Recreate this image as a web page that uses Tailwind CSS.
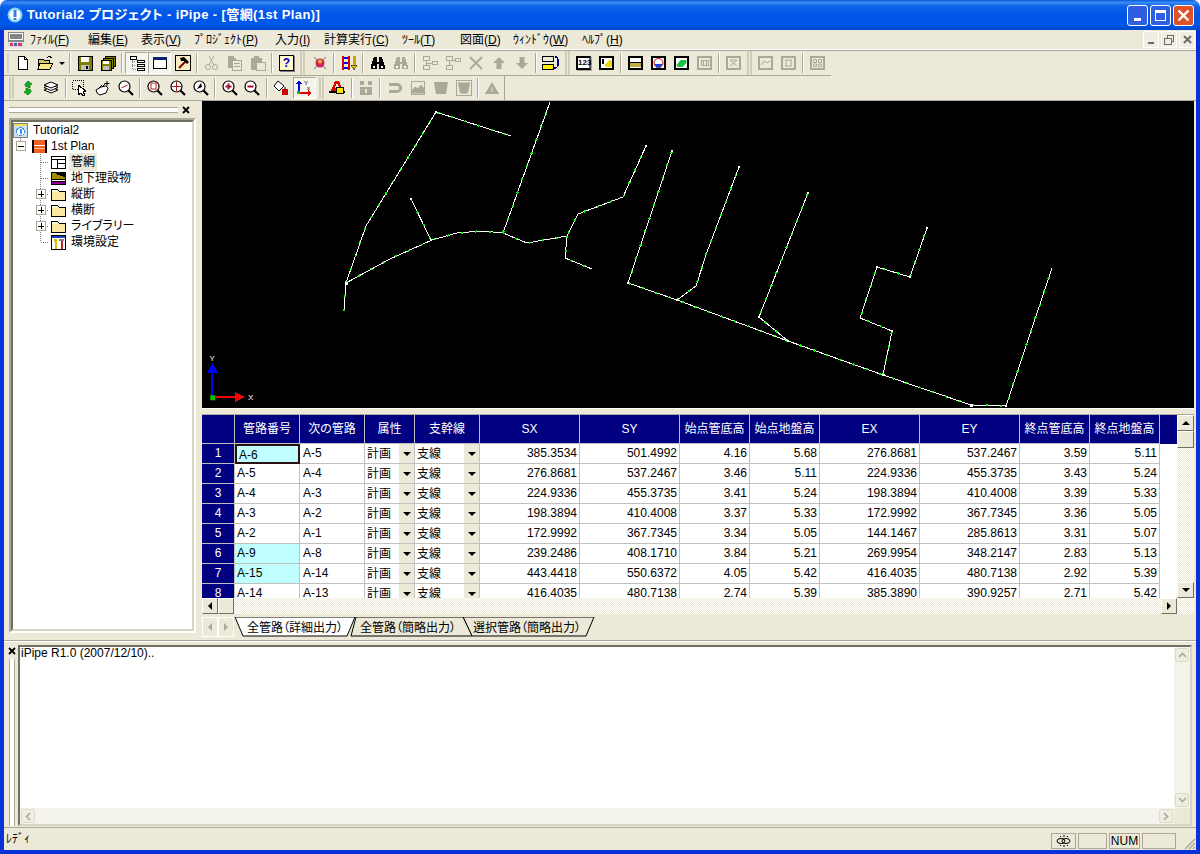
<!DOCTYPE html>
<html lang="ja">
<head>
<meta charset="UTF-8">
<title>iPipe</title>
<script src="https://cdn.jsdelivr.net/npm/@tailwindcss/browser@4"></script>
</head>
<body class="bg-white">
<div class="w-[1200px] h-[854px] overflow-hidden flex flex-col font-['Liberation_Sans','Noto_Sans_CJK_JP',sans-serif] text-[12px] text-black [font-feature-settings:'palt']">

  <!-- title bar -->
  <div class="h-[30px] shrink-0 rounded-t-[7px] flex items-center pl-[7px] pr-[6px] bg-[linear-gradient(#0a57d8_0,#3a8cf6_8%,#0f63e8_20%,#0055e5_50%,#0058ea_80%,#0049cc_100%)]">
    <svg class="w-[16px] h-[16px]" viewBox="0 0 16 16"><circle cx="8" cy="8" r="7.5" fill="#7fd4f4"/><circle cx="8" cy="8" r="5.5" fill="#fff"/><rect x="6.5" y="3" width="3" height="7" fill="#3a80d8"/><rect x="6.5" y="11" width="3" height="2" fill="#3a80d8"/></svg>
    <span class="ml-[4px] text-white font-bold text-[13px] tracking-[0.4px] whitespace-nowrap">Tutorial2 プロジェクト - iPipe - [管網(1st Plan)]</span>
    <div class="ml-auto flex gap-[2px]">
      <div class="w-[21px] h-[21px] rounded-[3px] border border-white bg-[#2f5fe0] flex items-end pl-[6px] pb-[4px]"><div class="w-[7px] h-[3px] bg-white"></div></div>
      <div class="w-[21px] h-[21px] rounded-[3px] border border-white bg-[#2f5fe0] flex items-center justify-center"><div class="w-[11px] h-[11px] border border-white border-t-[3px]"></div></div>
      <div class="w-[21px] h-[21px] rounded-[3px] border border-white bg-[#e0512a] flex items-center justify-center"><svg class="w-[13px] h-[13px]" viewBox="0 0 13 13"><path d="M1.5 1.5l10 10M11.5 1.5l-10 10" stroke="#fff" stroke-width="2.4"/></svg></div>
    </div>
  </div>

  <!-- window body -->
  <div class="flex-1 min-h-0 flex flex-col border-x-4 border-b-4 border-[#0831d9] bg-[#ece9d8]">

    <!-- menu -->
    <div class="h-[19px] shrink-0 flex items-center relative">
      <svg class="ml-[4px] w-[16px] h-[16px]" viewBox="0 0 16 16" shape-rendering="crispEdges"><rect x="0" y="0" width="16" height="10" fill="#848484"/><rect x="1" y="1" width="14" height="7" fill="#fff"/><rect x="2" y="2" width="12" height="5" fill="#848484"/><rect x="0" y="10" width="16" height="5" fill="#d8d8f0"/><rect x="2" y="11" width="3" height="3" fill="#d04040"/><rect x="6" y="11" width="3" height="3" fill="#4060c0"/><rect x="10" y="11" width="4" height="3" fill="#d04040"/></svg>
      <span class="absolute left-[26px]">ﾌｧｲﾙ(<u>F</u>)</span>
      <span class="absolute left-[84px]">編集(<u>E</u>)</span>
      <span class="absolute left-[137px]">表示(<u>V</u>)</span>
      <span class="absolute left-[190px]">ﾌﾟﾛｼﾞｪｸﾄ(<u>P</u>)</span>
      <span class="absolute left-[271px]">入力(<u>I</u>)</span>
      <span class="absolute left-[320px]">計算実行(<u>C</u>)</span>
      <span class="absolute left-[398px]">ﾂｰﾙ(<u>T</u>)</span>
      <span class="absolute left-[456px]">図面(<u>D</u>)</span>
      <span class="absolute left-[509px]">ｳｨﾝﾄﾞｳ(<u>W</u>)</span>
      <span class="absolute left-[578px]">ﾍﾙﾌﾟ(<u>H</u>)</span>
      <div class="ml-auto flex gap-[2px] pr-[1px]">
        <div class="w-[16px] h-[17px] bg-[#f0eee2] border border-white flex items-end justify-center pb-[3px]"><div class="w-[6px] h-[2px] bg-[#6e6e60]"></div></div>
        <div class="w-[16px] h-[17px] bg-[#f0eee2] border border-white flex items-center justify-center"><svg class="w-[10px] h-[10px]" viewBox="0 0 10 10" shape-rendering="crispEdges" fill="none" stroke="#6e6e60"><path d="M3 3V.5h6.5V6H7"/><path d="M.5 3.500h6.500V9.500H.5z"/></svg></div>
        <div class="w-[16px] h-[17px] bg-[#f0eee2] border border-white flex items-center justify-center"><svg class="w-[9px] h-[9px]" viewBox="0 0 9 9"><path d="M1 1l7 7M8 1l-7 7" stroke="#6e6e60" stroke-width="2"/></svg></div>
      </div>
    </div>
    <div class="h-[2px] shrink-0 border-t border-white bg-[#aca899]"></div>

    <svg class="hidden">
      <symbol id="lens" viewBox="0 0 16 16"><circle cx="6.500" cy="6.500" r="5.500" fill="#fff" stroke="#000" stroke-width="1.200"/><path d="M10.500 10.500l4.500 4.500" stroke="#000" stroke-width="2.200"/></symbol>
    </svg>

    <!-- toolbar 1 -->
    <div class="h-[25px] shrink-0 flex items-center">
      <div class="flex items-center h-[25px] w-[827px] border-b border-[#aca899]">
        <span class="w-[2px] h-[20px] ml-[3px] mr-[2px] bg-[#d8d4c2]"></span>
        <div class="w-[23px] h-[22px] flex items-center justify-center"><svg class="w-4 h-4" viewBox="0 0 16 16" shape-rendering="crispEdges"><path d="M3.500 1.500h6l3 3v10h-9z" fill="#fff" stroke="#000"/><path d="M9.500 1.500v3h3" fill="none" stroke="#000"/></svg></div>
        <div class="w-[23px] h-[22px] flex items-center justify-center"><svg class="w-[17px] h-4" viewBox="0 0 17 16" shape-rendering="crispEdges"><path d="M1 4h5l1 1h5v8H1z" fill="#d8c860" stroke="#000"/><path d="M3 8h13l-3 6H1z" fill="#f8e888" stroke="#000"/><path d="M10 3l2-2 3 2" fill="none" stroke="#000"/></svg></div>
        <div class="w-[10px] h-[22px] flex items-center justify-center"><div class="w-0 h-0 border-x-[3px] border-x-transparent border-t-[3px] border-t-black"></div></div>
        <span class="mx-[2px] w-[2px] h-[20px] border-l border-l-[#aca899] border-r border-r-white"></span>
        <div class="w-[23px] h-[22px] flex items-center justify-center"><svg class="w-4 h-4" viewBox="0 0 16 16" shape-rendering="crispEdges"><rect x="1" y="1" width="14" height="14" fill="#808000" stroke="#000"/><rect x="4" y="2" width="8" height="5" fill="#fff"/><rect x="4" y="10" width="8" height="5" fill="#c0c0c0"/><rect x="9" y="11" width="2" height="3" fill="#000"/></svg></div>
        <div class="w-[23px] h-[22px] flex items-center justify-center"><svg class="w-4 h-4" viewBox="0 0 16 16" shape-rendering="crispEdges"><rect x="5" y="1" width="10" height="10" fill="#808000" stroke="#000"/><rect x="3" y="3" width="10" height="10" fill="#808000" stroke="#000"/><rect x="1" y="5" width="10" height="10" fill="#808000" stroke="#000"/><rect x="3" y="6" width="6" height="3" fill="#fff"/><rect x="3" y="11" width="6" height="4" fill="#c0c0c0"/></svg></div>
        <span class="mx-[2px] w-[2px] h-[20px] border-l border-l-[#aca899] border-r border-r-white"></span>
        <div class="w-[23px] h-[22px] flex items-center justify-center border border-t-[#aca899] border-l-[#aca899] border-b-white border-r-white bg-[#f4f3ec]"><svg class="w-4 h-4" viewBox="0 0 16 16" shape-rendering="crispEdges"><rect x="1" y="1" width="6" height="3" fill="#fff" stroke="#000"/><rect x="8" y="5" width="7" height="2" fill="#fff" stroke="#000"/><rect x="8" y="9" width="7" height="2" fill="#fff" stroke="#000"/><rect x="8" y="13" width="7" height="2" fill="#fff" stroke="#000"/><path d="M3 5v9h4M3 10h4M3 6h4" stroke="#808080" stroke-dasharray="1 1" fill="none"/></svg></div>
        <div class="w-[23px] h-[22px] flex items-center justify-center border border-t-[#aca899] border-l-[#aca899] border-b-white border-r-white bg-[#f4f3ec]"><svg class="w-4 h-4" viewBox="0 0 16 16" shape-rendering="crispEdges"><rect x="1.500" y="2.500" width="13" height="11" fill="#fff" stroke="#000"/><rect x="1" y="2" width="14" height="3" fill="#0a246a"/></svg></div>
        <div class="w-[23px] h-[22px] flex items-center justify-center"><svg class="w-4 h-4" viewBox="0 0 16 16"><rect x="0.500" y="0.500" width="15" height="15" fill="#f8f0c0" stroke="#000"/><path d="M4 13l7-7" stroke="#800000" stroke-width="2"/><path d="M5 3l4-1 5 5-2 2-3-3-3 0z" fill="#000"/></svg></div>
        <span class="mx-[2px] w-[2px] h-[20px] border-l border-l-[#aca899] border-r border-r-white"></span>
        <div class="w-[23px] h-[22px] flex items-center justify-center"><svg class="w-4 h-4" viewBox="0 0 16 16" fill="none" stroke="#aca899"><circle cx="4" cy="12" r="2.500"/><circle cx="11" cy="12" r="2.500"/><path d="M5 10L10 1M10 10L5 1"/></svg></div>
        <div class="w-[23px] h-[22px] flex items-center justify-center"><svg class="w-4 h-4" viewBox="0 0 16 16" shape-rendering="crispEdges" fill="#aca899"><path d="M1 1h6v2h2v10H1z"/><path d="M5 5h9v10H5z" fill="#ece9d8" stroke="#aca899"/><path d="M7 8h6v1H7zM7 11h6v1H7z"/></svg></div>
        <div class="w-[23px] h-[22px] flex items-center justify-center"><svg class="w-4 h-4" viewBox="0 0 16 16" shape-rendering="crispEdges" fill="#aca899"><path d="M1 3h11v12H1z"/><path d="M4 1h5v3H4z"/><rect x="6" y="7" width="9" height="8" fill="#ece9d8" stroke="#aca899"/></svg></div>
        <span class="mx-[2px] w-[2px] h-[20px] border-l border-l-[#aca899] border-r border-r-white"></span>
        <div class="w-[23px] h-[22px] flex items-center justify-center"><div class="w-[15px] h-[16px] border border-black bg-[#fff8c8] shadow-[1px_1px_0_#808080] flex items-center justify-center font-bold text-[#0000c0] text-[12px] leading-none">?</div></div>
        <span class="ml-[2px] mr-[3px] w-[5px] h-[24px] border-x-2 border-x-[#d0ccb8]"></span>
        <div class="w-[23px] h-[22px] flex items-center justify-center"><svg class="w-4 h-4" viewBox="0 0 16 16"><path d="M2 2l12 12M14 2L2 14" stroke="#aca899" stroke-width="1.500"/><circle cx="8" cy="8" r="4.500" fill="#d02060"/><circle cx="8" cy="6.500" r="2" fill="#e0c020"/></svg></div>
        <span class="mx-[2px] w-[2px] h-[20px] border-l border-l-[#aca899] border-r border-r-white"></span>
        <div class="w-[23px] h-[22px] flex items-center justify-center"><svg class="w-4 h-4" viewBox="0 0 16 16" shape-rendering="crispEdges"><path d="M1 3h8M1 8h8M1 13h8" stroke="#0000e0" stroke-width="2"/><path d="M2 1v14M8 1v14" stroke="#d00000" stroke-width="1.500"/><path d="M13 1v10" stroke="#d0a000" stroke-width="3"/><path d="M10 10h6l-3 5z" fill="#e0c000" stroke="#000" stroke-width=".5"/></svg></div>
        <span class="mx-[2px] w-[2px] h-[20px] border-l border-l-[#aca899] border-r border-r-white"></span>
        <div class="w-[23px] h-[22px] flex items-center justify-center"><svg class="w-4 h-4" viewBox="0 0 16 16" shape-rendering="crispEdges"><path d="M4 2h3v5h2V2h3l3 9v3H9V9H7v5H1v-3z" fill="#000"/><rect x="3" y="11" width="2" height="2" fill="#fff"/><rect x="11" y="11" width="2" height="2" fill="#fff"/></svg></div>
        <div class="w-[23px] h-[22px] flex items-center justify-center"><svg class="w-4 h-4" viewBox="0 0 16 16" shape-rendering="crispEdges"><path d="M4 2h3v5h2V2h3l3 9v3H9V9H7v5H1v-3z" fill="#aca899"/><rect x="3" y="11" width="2" height="2" fill="#fff"/><rect x="11" y="11" width="2" height="2" fill="#fff"/></svg></div>
        <span class="mx-[2px] w-[2px] h-[20px] border-l border-l-[#aca899] border-r border-r-white"></span>
        <div class="w-[23px] h-[22px] flex items-center justify-center"><svg class="w-4 h-4" viewBox="0 0 16 16" shape-rendering="crispEdges" fill="#ece9d8" stroke="#aca899"><rect x="1.500" y="1.500" width="6" height="4"/><rect x="1.500" y="10.500" width="6" height="4"/><rect x="10.500" y="6.500" width="5" height="3"/><path d="M4.500 5.500v5M4.500 8h6" fill="none"/></svg></div>
        <div class="w-[23px] h-[22px] flex items-center justify-center"><svg class="w-4 h-4" viewBox="0 0 16 16" shape-rendering="crispEdges" fill="#ece9d8" stroke="#aca899"><rect x="1.500" y="1.500" width="6" height="4"/><rect x="1.500" y="10.500" width="6" height="4"/><rect x="10.500" y="3.500" width="5" height="3"/><path d="M4.500 5.500v5M7.500 5h3" fill="none"/></svg></div>
        <div class="w-[23px] h-[22px] flex items-center justify-center"><svg class="w-4 h-4" viewBox="0 0 16 16"><path d="M2 2l12 12M14 2L2 14" stroke="#aca899" stroke-width="2"/></svg></div>
        <div class="w-[23px] h-[22px] flex items-center justify-center"><svg class="w-4 h-4" viewBox="0 0 16 16"><path d="M8 2l6 6h-3.500v6h-5V8H2z" fill="#aca899"/></svg></div>
        <div class="w-[23px] h-[22px] flex items-center justify-center"><svg class="w-4 h-4" viewBox="0 0 16 16"><path d="M8 14l6-6h-3.500V2h-5v6H2z" fill="#aca899"/></svg></div>
        <span class="mx-[2px] w-[2px] h-[20px] border-l border-l-[#aca899] border-r border-r-white"></span>
        <div class="w-[23px] h-[22px] flex items-center justify-center"><svg class="w-[17px] h-4" viewBox="0 0 17 16" shape-rendering="crispEdges"><rect x="0.500" y="1.500" width="11" height="5" fill="#ece9d8" stroke="#000"/><rect x="0.500" y="9.500" width="11" height="5" fill="#f8f000" stroke="#000"/><path d="M13 2h2l1 2v7l-2 2h-2" fill="none" stroke="#000080" stroke-width="1.300"/></svg></div>
        <span class="ml-[3px] mr-[2px] w-[5px] h-[24px] border-x-2 border-x-[#d0ccb8]"></span>
        <div class="w-[23px] h-[22px] flex items-center justify-center"><div class="w-[15px] h-[14px] border-2 border-black border-r-[#555] bg-white shadow-[1px_1px_0_#aca899] text-[8px] leading-[10px] font-bold text-center">123</div></div>
        <div class="w-[23px] h-[22px] flex items-center justify-center"><svg class="w-[15px] h-[14px]" viewBox="0 0 15 14" shape-rendering="crispEdges"><rect x="1" y="1" width="13" height="12" fill="#fff" stroke="#000" stroke-width="2"/><rect x="3" y="3" width="2" height="5"/><path d="M6 8l5-4 2 2v5H7z" fill="#f0d800"/></svg></div>
        <span class="mx-[2px] w-[2px] h-[20px] border-l border-l-[#aca899] border-r border-r-white"></span>
        <div class="w-[23px] h-[22px] flex items-center justify-center"><svg class="w-[15px] h-[14px]" viewBox="0 0 15 14" shape-rendering="crispEdges"><rect x="1" y="1" width="13" height="12" fill="#fff" stroke="#000" stroke-width="2"/><rect x="2" y="6" width="11" height="1" fill="#000"/><rect x="2" y="7" width="11" height="4" fill="#c0b040"/></svg></div>
        <div class="w-[23px] h-[22px] flex items-center justify-center"><svg class="w-[15px] h-[14px]" viewBox="0 0 15 14"><rect x="1" y="1" width="13" height="12" fill="#fff" stroke="#000" stroke-width="2"/><circle cx="7.500" cy="7" r="4.500" fill="#fff" stroke="#e00000"/><path d="M3.500 8h8l-2 3.500h-4z" fill="#2040e0"/></svg></div>
        <div class="w-[23px] h-[22px] flex items-center justify-center"><svg class="w-[15px] h-[14px]" viewBox="0 0 15 14"><rect x="1" y="1" width="13" height="12" fill="#fff" stroke="#000" stroke-width="2"/><path d="M2.500 9l4-5h6v3l-4 4h-5z" fill="#20c040"/></svg></div>
        <div class="w-[23px] h-[22px] flex items-center justify-center"><svg class="w-[15px] h-[14px]" viewBox="0 0 15 14" shape-rendering="crispEdges" fill="none" stroke="#aca899"><rect x="1" y="1" width="13" height="12" stroke-width="2"/><path d="M4 4h7v5H4zM6 4v5M9 4v5"/></svg></div>
        <span class="mx-[2px] w-[2px] h-[20px] border-l border-l-[#aca899] border-r border-r-white"></span>
        <div class="w-[23px] h-[22px] flex items-center justify-center"><svg class="w-[15px] h-[14px]" viewBox="0 0 15 14" fill="none" stroke="#aca899"><rect x="1" y="1" width="13" height="12" stroke-width="2"/><path d="M4 4l7 6M11 4l-7 6M4 4h7"/></svg></div>
        <span class="ml-[2px] mr-[2px] w-[5px] h-[24px] border-x-2 border-x-[#d0ccb8]"></span>
        <div class="w-[23px] h-[22px] flex items-center justify-center"><svg class="w-[15px] h-[14px]" viewBox="0 0 15 14" fill="none" stroke="#aca899"><rect x="1" y="1" width="13" height="12" stroke-width="2"/><path d="M3 9l3-4 3 2 3-2"/></svg></div>
        <div class="w-[23px] h-[22px] flex items-center justify-center"><svg class="w-[15px] h-[14px]" viewBox="0 0 15 14" fill="none" stroke="#aca899"><rect x="1" y="1" width="13" height="12" stroke-width="2"/><path d="M4 4h7M5 4v6M10 4v6M4 10h7"/></svg></div>
        <span class="mx-[2px] w-[2px] h-[20px] border-l border-l-[#aca899] border-r border-r-white"></span>
        <div class="w-[23px] h-[22px] flex items-center justify-center"><svg class="w-[15px] h-[14px]" viewBox="0 0 15 14" fill="none" stroke="#aca899"><rect x="1" y="1" width="13" height="12" stroke-width="2"/><path d="M3.500 3.500h3v3h-3zM8.500 3.500h3v3h-3zM3.500 8h3v2.500h-3zM8.500 8h3v2.500h-3z"/></svg></div>
      </div>
    </div>

    <!-- toolbar 2 -->
    <div class="h-[24px] shrink-0 flex items-center">
      <div class="flex items-center h-[24px] w-[501px] border-r border-[#aca899]">
        <span class="ml-[5px] mr-[2px] w-[5px] h-[22px] border-x-2 border-x-[#d0ccb8]"></span>
        <div class="w-[23px] h-[22px] ml-[1px] flex items-center justify-center"><svg class="w-4 h-4" viewBox="0 0 16 16"><path d="M8 1l4 3-2 1v3L5 6V4z" fill="#10b020" stroke="#006000" stroke-width=".6"/><path d="M8 15l-4-3 2-1V8l5 2v2z" fill="#10b020" stroke="#006000" stroke-width=".6"/></svg></div>
        <div class="w-[23px] h-[22px] flex items-center justify-center"><svg class="w-4 h-4" viewBox="0 0 16 16" fill="#fff" stroke="#000"><path d="M1 10l7 3 7-3-7-3z"/><path d="M1 7.500l7 3 7-3-7-3z"/><path d="M1 5l7 3 7-3-7-3z"/></svg></div>
        <span class="mx-[2px] w-[2px] h-[20px] border-l border-l-[#aca899] border-r border-r-white"></span>
        <div class="w-[23px] h-[22px] flex items-center justify-center"><svg class="w-4 h-4" viewBox="0 0 16 16" shape-rendering="crispEdges"><rect x="0.500" y="0.500" width="11" height="9" fill="none" stroke="#000" stroke-dasharray="1 1"/><path d="M6 5l8 6-3 1 2 3-2 1-2-3-3 2z" fill="#fff" stroke="#000"/></svg></div>
        <div class="w-[23px] h-[22px] flex items-center justify-center"><svg class="w-4 h-4" viewBox="0 0 16 16"><path d="M1 10l5-3 5-1 2 2-2 5-6 2-3-2z" fill="#fff" stroke="#000"/><path d="M4 8l3-3M7 7l3-3M12 1v5M9.500 3.500h5" stroke="#000" fill="none"/></svg></div>
        <div class="w-[23px] h-[22px] flex items-center justify-center relative"><svg class="w-4 h-4"><use href="#lens"/></svg><svg class="absolute w-4 h-4" viewBox="0 0 16 16"><path d="M3.500 8l6-3" stroke="#c02020"/></svg></div>
        <span class="mx-[2px] w-[2px] h-[20px] border-l border-l-[#aca899] border-r border-r-white"></span>
        <div class="w-[23px] h-[22px] flex items-center justify-center relative"><svg class="w-4 h-4"><use href="#lens"/></svg><svg class="absolute w-4 h-4" viewBox="0 0 16 16"><rect x="4" y="3" width="5" height="6" fill="#fff" stroke="#c02020"/></svg></div>
        <div class="w-[23px] h-[22px] flex items-center justify-center relative"><svg class="w-4 h-4"><use href="#lens"/></svg><svg class="absolute w-4 h-4" viewBox="0 0 16 16"><path d="M6.500 1.500v10M1.500 6.500h10" stroke="#a02020"/></svg></div>
        <div class="w-[23px] h-[22px] flex items-center justify-center relative"><svg class="w-4 h-4"><use href="#lens"/></svg><svg class="absolute w-4 h-4" viewBox="0 0 16 16"><path d="M4 9l4-6 1 4z" fill="#000"/></svg></div>
        <span class="mx-[2px] w-[2px] h-[20px] border-l border-l-[#aca899] border-r border-r-white"></span>
        <div class="w-[23px] h-[22px] flex items-center justify-center relative"><svg class="w-4 h-4"><use href="#lens"/></svg><svg class="absolute w-4 h-4" viewBox="0 0 16 16"><path d="M3.500 6.500h6M6.500 3.500v6" stroke="#a01030" stroke-width="2"/></svg></div>
        <div class="w-[23px] h-[22px] flex items-center justify-center relative"><svg class="w-4 h-4"><use href="#lens"/></svg><svg class="absolute w-4 h-4" viewBox="0 0 16 16"><path d="M3.500 6.500h6" stroke="#a01030" stroke-width="2"/></svg></div>
        <span class="mx-[2px] w-[2px] h-[20px] border-l border-l-[#aca899] border-r border-r-white"></span>
        <div class="w-[23px] h-[22px] flex items-center justify-center"><svg class="w-4 h-4" viewBox="0 0 16 16"><path d="M5 1l6 5-5 5-5-5z" fill="#fff" stroke="#000"/><rect x="9" y="9" width="6" height="6" fill="#d00000"/><path d="M12 7v3" stroke="#000"/></svg></div>
        <div class="w-[23px] h-[22px] flex items-center justify-center border border-t-[#aca899] border-l-[#aca899] border-b-white border-r-white bg-[#f4f3ec]"><svg class="w-[18px] h-[18px]" viewBox="0 0 18 18" shape-rendering="crispEdges"><path d="M4 14V4" stroke="#0000e0" stroke-width="2"/><path d="M1 5l3-4 3 4z" fill="#0000e0"/><path d="M4 14h10" stroke="#e00000" stroke-width="2"/><path d="M13 11l4 3-4 3z" fill="#e00000"/><rect x="2" y="12" width="3" height="3" fill="#00c000"/><text x="9" y="6" font-size="6" fill="#000">Y</text><text x="12" y="11" font-size="6" fill="#000">x</text></svg></div>
        <span class="ml-[3px] mr-[2px] w-[5px] h-[22px] border-x-2 border-x-[#d0ccb8]"></span>
        <div class="w-[23px] h-[22px] flex items-center justify-center"><svg class="w-4 h-4" viewBox="0 0 16 16" shape-rendering="crispEdges"><path d="M6 1h4l5 12H1z" fill="#e00000"/><path d="M7 4h2l1 4H6z" fill="#ece9d8"/><rect x="0" y="11" width="16" height="2" fill="#000"/><rect x="7" y="7" width="7" height="6" fill="#f8e800" stroke="#000"/></svg></div>
        <span class="mx-[2px] w-[2px] h-[20px] border-l border-l-[#aca899] border-r border-r-white"></span>
        <div class="w-[23px] h-[22px] flex items-center justify-center"><svg class="w-4 h-4" viewBox="0 0 16 16" shape-rendering="crispEdges" fill="#aca899"><rect x="2" y="1" width="4" height="4"/><rect x="10" y="1" width="4" height="4"/><rect x="2" y="7" width="12" height="8"/><rect x="7" y="9" width="2" height="4" fill="#ece9d8"/></svg></div>
        <span class="mx-[2px] w-[2px] h-[20px] border-l border-l-[#aca899] border-r border-r-white"></span>
        <div class="w-[23px] h-[22px] flex items-center justify-center"><svg class="w-4 h-4" viewBox="0 0 16 16"><path d="M2 3h8a5 5 0 0 1 0 10H2v-3h8a2 2 0 0 0 0-4H2z" fill="#aca899"/></svg></div>
        <div class="w-[23px] h-[22px] flex items-center justify-center"><svg class="w-4 h-4" viewBox="0 0 16 16" fill="none" stroke="#aca899"><rect x="1.500" y="1.500" width="13" height="13"/><path d="M2 11l3-4 3 2 3-4 3 4v4H2z" fill="#aca899"/></svg></div>
        <div class="w-[23px] h-[22px] flex items-center justify-center"><svg class="w-4 h-4" viewBox="0 0 16 16"><path d="M1 2h14l-2 12H3z" fill="#aca899"/></svg></div>
        <div class="w-[23px] h-[22px] flex items-center justify-center"><svg class="w-4 h-4" viewBox="0 0 16 16" fill="none" stroke="#aca899"><rect x="0.500" y="0.500" width="15" height="15"/><path d="M2.500 3h11l-2 10h-7z" fill="#aca899"/></svg></div>
        <span class="mx-[2px] w-[2px] h-[20px] border-l border-l-[#aca899] border-r border-r-white"></span>
        <div class="w-[23px] h-[22px] flex items-center justify-center"><svg class="w-4 h-4" viewBox="0 0 16 16"><path d="M8 2l7 12H1z" fill="#aca899"/><path d="M8 7v5" stroke="#ece9d8"/></svg></div>
      </div>
    </div>
    <div class="h-px shrink-0 bg-[#aca899]"></div>

    <!-- main -->
    <div class="h-[536px] shrink-0 flex">
      <!-- tree pane -->
      <div class="w-[198px] shrink-0 flex flex-col pl-[5px] pr-[6px]">
        <div class="h-[17px] shrink-0 flex items-center">
          <div class="w-[169px] h-[6px] border-y border-y-[#aca899] bg-white"></div>
          <svg class="ml-[4px] w-[8px] h-[8px]" viewBox="0 0 8 8"><path d="M1 1l6 6M7 1L1 7" stroke="#000" stroke-width="1.800"/></svg>
        </div>
        <div class="h-[515px] shrink-0 border-2 border-t-[#aca899] border-l-[#aca899] border-b-white border-r-white">
          <div class="relative h-full bg-white border-2 border-t-[#716f64] border-l-[#716f64] border-b-[#d8d4c2] border-r-[#d8d4c2]">
            <!-- tree connectors -->
            <svg class="absolute left-0 top-0" width="60" height="140" shape-rendering="crispEdges">
              <path d="M7.500 14v10M7.500 24h6M27.500 32v88M27.500 40h8M27.500 56h8M27.500 72h8M27.500 88h8M27.500 104h8M27.500 120h8" stroke="#808080" stroke-dasharray="1 1" fill="none"/>
              <rect x="3.500" y="19.500" width="9" height="9" fill="#fff" stroke="#aca899"/><path d="M5 24h6" stroke="#000"/>
              <rect x="23.500" y="67.500" width="9" height="9" fill="#fff" stroke="#aca899"/><path d="M25 72h6M28 69v6" stroke="#000"/>
              <rect x="23.500" y="83.500" width="9" height="9" fill="#fff" stroke="#aca899"/><path d="M25 88h6M28 85v6" stroke="#000"/>
              <rect x="23.500" y="99.500" width="9" height="9" fill="#fff" stroke="#aca899"/><path d="M25 104h6M28 101v6" stroke="#000"/>
            </svg>
            <div class="relative flex flex-col">
              <div class="h-4 flex items-center"><svg class="w-[15px] h-[15px]" viewBox="0 0 15 15" shape-rendering="crispEdges"><rect x="0.500" y="0.500" width="14" height="14" fill="#c8e0f0" stroke="#808080"/><rect x="1" y="1" width="13" height="2" fill="#f0e060"/><circle cx="7.500" cy="8.500" r="4" fill="#fff" stroke="#4090e0"/><rect x="7" y="6" width="1.500" height="5" fill="#4090e0"/></svg><span class="ml-[5px]">Tutorial2</span></div>
              <div class="h-4 flex items-center pl-[19px]"><svg class="w-[15px] h-[15px]" viewBox="0 0 15 15" shape-rendering="crispEdges"><rect x="0" y="1" width="15" height="13" fill="#f06020"/><rect x="0" y="1" width="2" height="13" fill="#000"/><rect x="13" y="1" width="2" height="13" fill="#000"/><rect x="2" y="6" width="11" height="1" fill="#fff"/><rect x="2" y="9" width="11" height="1" fill="#f8c0a0"/></svg><span class="ml-[4px]">1st Plan</span></div>
              <div class="h-4 flex items-center pl-[38px]"><svg class="w-[15px] h-[15px]" viewBox="0 0 15 15" shape-rendering="crispEdges" fill="none" stroke="#000"><rect x="0.500" y="1.500" width="14" height="12" fill="#fff"/><path d="M1 4.500h13M6.500 5v8M7 8.500h7"/></svg><span class="ml-[3px] px-[2px] bg-[#ece9d8]">管網</span></div>
              <div class="h-4 flex items-center pl-[38px]"><svg class="w-[15px] h-[15px]" viewBox="0 0 15 15" shape-rendering="crispEdges"><rect x="0" y="1" width="15" height="13" fill="#000"/><path d="M1 2h3l3 2 7 2v2H1z" fill="#a09000"/><rect x="1" y="9" width="13" height="1" fill="#fff"/><rect x="1" y="11" width="13" height="2" fill="#900090"/></svg><span class="ml-[5px]">地下理設物</span></div>
              <div class="h-4 flex items-center pl-[38px]"><svg class="w-[15px] h-[15px]" viewBox="0 0 15 15" shape-rendering="crispEdges"><path d="M0.500 2.500h6l2 2h6v9h-14z" fill="#f8e8a0" stroke="#000"/><rect x="1" y="3" width="5" height="2" fill="#fff8d0"/></svg><span class="ml-[5px]">縦断</span></div>
              <div class="h-4 flex items-center pl-[38px]"><svg class="w-[15px] h-[15px]" viewBox="0 0 15 15" shape-rendering="crispEdges"><path d="M0.500 2.500h6l2 2h6v9h-14z" fill="#f8e8a0" stroke="#000"/><rect x="1" y="3" width="5" height="2" fill="#fff8d0"/></svg><span class="ml-[5px]">横断</span></div>
              <div class="h-4 flex items-center pl-[38px]"><svg class="w-[15px] h-[15px]" viewBox="0 0 15 15" shape-rendering="crispEdges"><path d="M0.500 2.500h6l2 2h6v9h-14z" fill="#f8e8a0" stroke="#000"/><rect x="1" y="3" width="5" height="2" fill="#fff8d0"/></svg><span class="ml-[5px]">ライブラリー</span></div>
              <div class="h-4 flex items-center pl-[38px]"><svg class="w-[15px] h-[15px]" viewBox="0 0 15 15" shape-rendering="crispEdges"><rect x="0.500" y="0.500" width="14" height="14" fill="#fff" stroke="#000"/><rect x="1" y="1" width="13" height="2" fill="#2040c0"/><rect x="3" y="4" width="3" height="3" fill="#e0c000"/><rect x="4" y="7" width="1.500" height="7" fill="#e0c000"/><rect x="8" y="4" width="5" height="2" fill="#808080"/><rect x="10" y="6" width="2" height="8" fill="#c02020"/></svg><span class="ml-[5px]">環境設定</span></div>
            </div>
          </div>
        </div>
      </div>

      <!-- map + grid -->
      <div class="w-[992px] shrink-0 flex flex-col">
        <svg class="h-[307px] w-[992px] shrink-0 bg-black" viewBox="202 101 992 307" shape-rendering="crispEdges">
          <g fill="none" stroke="#fff">
            <polyline points="344,311 346,283 366,226 436,112 511,136"/>
            <polyline points="346,283 388,260 432,240 457,233 482,231 503,233 527,243 567,236 578,214 623,197 646,146"/>
            <polyline points="411,199 431,240"/>
            <polyline points="503,233 550,102"/>
            <polyline points="567,236 565,258 592,269"/>
            <polyline points="672,151 628,283 677,300 788,341 883,375 971,405 1006,406 1052,268"/>
            <polyline points="677,300 696,286 707,252 739,167"/>
            <polyline points="788,341 759,317 808,193"/>
            <polyline points="883,375 892,331 860,318 877,267 910,277 927,228"/>
          </g>
          <g fill="none" stroke="#00ff00" stroke-width="2" stroke-dasharray="2 12">
            <polyline points="344,311 346,283 366,226 436,112 511,136"/>
            <polyline points="346,283 388,260 432,240 457,233 482,231 503,233 527,243 567,236 578,214 623,197 646,146"/>
            <polyline points="411,199 431,240"/>
            <polyline points="503,233 550,102"/>
            <polyline points="567,236 565,258 592,269"/>
            <polyline points="672,151 628,283 677,300 788,341 883,375 971,405 1006,406 1052,268"/>
            <polyline points="677,300 696,286 707,252 739,167"/>
            <polyline points="788,341 759,317 808,193"/>
            <polyline points="883,375 892,331 860,318 877,267 910,277 927,228"/>
          </g>
          <g fill="#fff">
            <rect x="345" y="282" width="3" height="3"/><rect x="435" y="111" width="2" height="2"/><rect x="410" y="198" width="2" height="2"/><rect x="430" y="239" width="2" height="2"/>
            <rect x="645" y="145" width="2" height="2"/><rect x="671" y="150" width="2" height="2"/><rect x="738" y="166" width="2" height="2"/><rect x="807" y="192" width="2" height="2"/>
            <rect x="627" y="282" width="2" height="2"/><rect x="676" y="299" width="2" height="2"/><rect x="787" y="340" width="2" height="2"/><rect x="882" y="374" width="3" height="2"/>
            <rect x="970" y="404" width="3" height="3"/><rect x="1005" y="405" width="2" height="2"/><rect x="758" y="316" width="2" height="2"/><rect x="891" y="330" width="2" height="2"/>
            <rect x="926" y="227" width="2" height="2"/><rect x="876" y="266" width="2" height="2"/><rect x="909" y="276" width="2" height="2"/>
          </g>
          <path d="M212 397V372" stroke="#0000ff" stroke-width="2"/>
          <path d="M207 373l5.500-10 5.500 10z" fill="#0000ff"/>
          <path d="M212 397h24" stroke="#ff0000" stroke-width="2"/>
          <path d="M235 392l10 5-10 5z" fill="#ff0000"/>
          <rect x="210" y="395" width="5" height="5" fill="#00c000" stroke="#006000" stroke-width=".5"/>
          <text x="209.500" y="361" font-size="8" fill="#fff" font-family="Liberation Sans">Y</text>
          <text x="248" y="400" font-size="8" fill="#fff" font-family="Liberation Sans">X</text>
        </svg>
        <div class="h-[7px] shrink-0 border-t border-white border-b border-b-[#aca899]"></div>

        <div class="h-[183px] shrink-0 flex">
          <div id="grid" class="w-[975px] overflow-hidden grid grid-cols-[33px_65px_65px_50px_65px_100px_100px_70px_70px_100px_100px_70px_70px_17px] grid-rows-[29px_repeat(8,20px)] content-start bg-white">
            <div class="bg-[#000080] border-r border-b border-[#c0c0c0]"></div>
            <div class="bg-[#000080] border-r border-b border-[#c0c0c0] text-white flex items-center justify-center">管路番号</div>
            <div class="bg-[#000080] border-r border-b border-[#c0c0c0] text-white flex items-center justify-center">次の管路</div>
            <div class="bg-[#000080] border-r border-b border-[#c0c0c0] text-white flex items-center justify-center">属性</div>
            <div class="bg-[#000080] border-r border-b border-[#c0c0c0] text-white flex items-center justify-center">支幹線</div>
            <div class="bg-[#000080] border-r border-b border-[#c0c0c0] text-white flex items-center justify-center">SX</div>
            <div class="bg-[#000080] border-r border-b border-[#c0c0c0] text-white flex items-center justify-center">SY</div>
            <div class="bg-[#000080] border-r border-b border-[#c0c0c0] text-white flex items-center justify-center">始点管底高</div>
            <div class="bg-[#000080] border-r border-b border-[#c0c0c0] text-white flex items-center justify-center">始点地盤高</div>
            <div class="bg-[#000080] border-r border-b border-[#c0c0c0] text-white flex items-center justify-center">EX</div>
            <div class="bg-[#000080] border-r border-b border-[#c0c0c0] text-white flex items-center justify-center">EY</div>
            <div class="bg-[#000080] border-r border-b border-[#c0c0c0] text-white flex items-center justify-center">終点管底高</div>
            <div class="bg-[#000080] border-r border-b border-[#c0c0c0] text-white flex items-center justify-center">終点地盤高</div>
            <div class="bg-[#000080]"></div>
          </div>
          <!-- grid vertical scrollbar -->
          <div class="w-[17px] shrink-0 flex flex-col bg-[repeating-conic-gradient(#ece9d8_0_25%,#fff_0_50%)] bg-[length:2px_2px]">
            <div class="h-[16px] bg-[#ece9d8] border border-t-white border-l-white border-r-[#716f64] border-b-[#716f64] flex items-center justify-center"><div class="w-0 h-0 border-x-[4px] border-x-transparent border-b-[4px] border-b-black"></div></div>
            <div class="h-[17px] bg-[#ece9d8] border border-t-white border-l-white border-r-[#716f64] border-b-[#716f64]"></div>
            <div class="h-[16px] mt-auto bg-[#ece9d8] border border-t-white border-l-white border-r-[#716f64] border-b-[#716f64] flex items-center justify-center"><div class="w-0 h-0 border-x-[4px] border-x-transparent border-t-[4px] border-t-black"></div></div>
          </div>
        </div>

        <!-- grid horizontal scrollbar -->
        <div class="h-[16px] shrink-0 flex bg-[repeating-conic-gradient(#ece9d8_0_25%,#fff_0_50%)] bg-[length:2px_2px]">
          <div class="w-[16px] bg-[#ece9d8] border border-t-white border-l-white border-r-[#716f64] border-b-[#716f64] flex items-center justify-center"><div class="w-0 h-0 border-y-[4px] border-y-transparent border-r-[4px] border-r-black"></div></div>
          <div class="w-[16px] bg-[#ece9d8] border border-t-white border-l-white border-r-[#716f64] border-b-[#716f64]"></div>
          <div class="w-[16px] ml-auto mr-[17px] bg-[#ece9d8] border border-t-white border-l-white border-r-[#716f64] border-b-[#716f64] flex items-center justify-center"><div class="w-0 h-0 border-y-[4px] border-y-transparent border-l-[4px] border-l-black"></div></div>
        </div>

        <!-- sheet tabs -->
        <div class="h-[23px] shrink-0 flex items-start pt-[3px]">
          <div class="w-[16px] h-[20px] border border-white flex items-center justify-center"><div class="w-0 h-0 border-y-[4px] border-y-transparent border-r-[4px] border-r-[#aca899]"></div></div>
          <div class="w-[16px] h-[20px] border border-white flex items-center justify-center"><div class="w-0 h-0 border-y-[4px] border-y-transparent border-l-[4px] border-l-[#aca899]"></div></div>
          <svg class="w-[380px] h-[20px]" viewBox="234 617 380 20" font-size="12">
            <path d="M594 617L586 636H472L463 617z" fill="#ece9d8" stroke="#000"/>
            <path d="M356 617H463L472 636H351z" fill="#ece9d8" stroke="#000"/>
            <path d="M235 617H355L347 636H243z" fill="#fff" stroke="#000"/>
            <text x="247" y="632">全管路（詳細出力）</text>
            <text x="360" y="632">全管路（簡略出力）</text>
            <text x="473" y="632">選択管路（簡略出力）</text>
          </svg>
        </div>
      </div>
    </div>

    <!-- log pane -->
    <div class="h-[8px] shrink-0 border-b-0"><div class="mt-[3px] h-[2px] border-t border-[#aca899] bg-white"></div></div>
    <div class="h-[181px] shrink-0 flex">
      <div class="w-[14px] shrink-0 flex flex-col items-center pt-[2px] pl-[2px]">
        <svg class="w-[8px] h-[8px]" viewBox="0 0 8 8"><path d="M1 1l6 6M7 1L1 7" stroke="#000" stroke-width="1.800"/></svg>
        <div class="mt-[4px] w-[6px] flex-1 border-x border-x-[#aca899] bg-white"></div>
      </div>
      <div class="w-[1174px] shrink-0 bg-white border-2 border-t-[#716f64] border-l-[#716f64] border-b-[#d8d4c2] border-r-[#d8d4c2] flex flex-col">
        <div class="flex-1 min-h-0 flex">
          <div class="flex-1 pl-[1px] leading-[12px]">iPipe R1.0 (2007/12/10)..</div>
          <div class="w-[16px] shrink-0 bg-[#f5f4ec] flex flex-col p-px">
            <div class="h-[14px] bg-[#eeede2] border border-[#dddbc8] rounded-[2px] flex items-center justify-center"><svg class="w-[9px] h-[6px]" viewBox="0 0 9 6"><path d="M1 5l3.500-3.500L8 5" stroke="#aca899" stroke-width="1.600" fill="none"/></svg></div>
            <div class="h-[14px] mt-auto bg-[#eeede2] border border-[#dddbc8] rounded-[2px] flex items-center justify-center"><svg class="w-[9px] h-[6px]" viewBox="0 0 9 6"><path d="M1 1l3.500 3.500L8 1" stroke="#aca899" stroke-width="1.600" fill="none"/></svg></div>
          </div>
        </div>
        <div class="h-[16px] shrink-0 flex bg-[#f5f4ec]">
          <div class="flex-1 flex p-px">
            <div class="w-[14px] bg-[#eeede2] border border-[#dddbc8] rounded-[2px] flex items-center justify-center"><svg class="w-[6px] h-[9px]" viewBox="0 0 6 9"><path d="M5 1L1.500 4.500 5 8" stroke="#aca899" stroke-width="1.600" fill="none"/></svg></div>
            <div class="w-[14px] ml-auto bg-[#eeede2] border border-[#dddbc8] rounded-[2px] flex items-center justify-center"><svg class="w-[6px] h-[9px]" viewBox="0 0 6 9"><path d="M1 1l3.500 3.500L1 8" stroke="#aca899" stroke-width="1.600" fill="none"/></svg></div>
          </div>
          <div class="w-[16px] bg-[#ece9d8]"></div>
        </div>
      </div>
    </div>

    <!-- status bar -->
    <div class="mt-[1px] h-px shrink-0 bg-[#aca899]"></div>
    <div class="flex-1 min-h-0 flex items-end pb-[1px] pl-[2px] relative">
      <span class="mb-[1px]">ﾚﾃﾞｨ</span>
      <div class="ml-auto flex gap-[2px] pr-[20px]">
        <div class="w-[25px] h-[16px] border border-[#aca899] flex items-center justify-center"><svg class="w-[17px] h-[12px]" viewBox="0 0 17 12" fill="none" stroke="#000"><ellipse cx="6" cy="6" rx="4" ry="2.500"/><ellipse cx="11" cy="6" rx="4" ry="2.500"/><path d="M5 1l1 1M9 0v2M13 1l-1 1M5 11l1-1M9 12v-2M13 11l-1-1"/></svg></div>
        <div class="w-[29px] h-[16px] border border-[#aca899]"></div>
        <div class="w-[31px] h-[16px] border border-[#aca899] leading-[14px] text-center">NUM</div>
        <div class="w-[34px] h-[16px] border border-[#aca899]"></div>
      </div>
      <svg class="absolute right-0 bottom-0 w-[13px] h-[13px]" viewBox="0 0 13 13"><path d="M12 2L2 12M12 6l-6 6M12 10l-2 2" stroke="#aca899" stroke-width="1.500"/></svg>
    </div>
  </div>
</div>

<script>
  const rows = [
    ['1', 'A-6', 'A-5', '385.3534', '501.4992', '4.16', '5.68', '276.8681', '537.2467', '3.59', '5.11'],
    ['2', 'A-5', 'A-4', '276.8681', '537.2467', '3.46', '5.11', '224.9336', '455.3735', '3.43', '5.24'],
    ['3', 'A-4', 'A-3', '224.9336', '455.3735', '3.41', '5.24', '198.3894', '410.4008', '3.39', '5.33'],
    ['4', 'A-3', 'A-2', '198.3894', '410.4008', '3.37', '5.33', '172.9992', '367.7345', '3.36', '5.05'],
    ['5', 'A-2', 'A-1', '172.9992', '367.7345', '3.34', '5.05', '144.1467', '285.8613', '3.31', '5.07'],
    ['6', 'A-9', 'A-8', '239.2486', '408.1710', '3.84', '5.21', '269.9954', '348.2147', '2.83', '5.13'],
    ['7', 'A-15', 'A-14', '443.4418', '550.6372', '4.05', '5.42', '416.4035', '480.7138', '2.92', '5.39'],
    ['8', 'A-14', 'A-13', '416.4035', '480.7138', '2.74', '5.39', '385.3890', '390.9257', '2.71', '5.42'],
  ];
  const cyan = ['1', '6', '7'];
  const cell = 'border-r border-b border-[#c0c0c0] leading-[19px] whitespace-nowrap overflow-hidden';
  const combo = (text) => `<div class="${cell} flex justify-between pl-[2px]"><span class="pt-px">${text}</span><div class="w-[15px] bg-[#ece9d8] flex items-center justify-center"><div class="w-0 h-0 border-x-[4px] border-x-transparent border-t-[4px] border-t-black"></div></div></div>`;
  const num = (v) => `<div class="${cell} text-right pr-[2px]">${v}</div>`;
  let html = '';
  for (const r of rows) {
    const first = r[0] === '1';
    const bg = cyan.includes(r[0]) ? 'bg-[#bfffff]' : '';
    const sel = first ? 'border-2 border-[#2b1212]' : cell;
    html += `<div class="bg-[#000080] text-white text-center leading-[19px] border-b border-r border-[#c0c0c0]">${r[0]}</div>`;
    html += `<div class="${sel} ${bg} leading-[18px] pl-[2px]">${r[1]}</div>`;
    html += `<div class="${cell} pl-[3px]">${r[2]}</div>`;
    html += combo('計画') + combo('支線');
    html += r.slice(3).map(num).join('');
    html += '<div></div>';
  }
  document.getElementById('grid').insertAdjacentHTML('beforeend', html);
</script>
</body>
</html>
